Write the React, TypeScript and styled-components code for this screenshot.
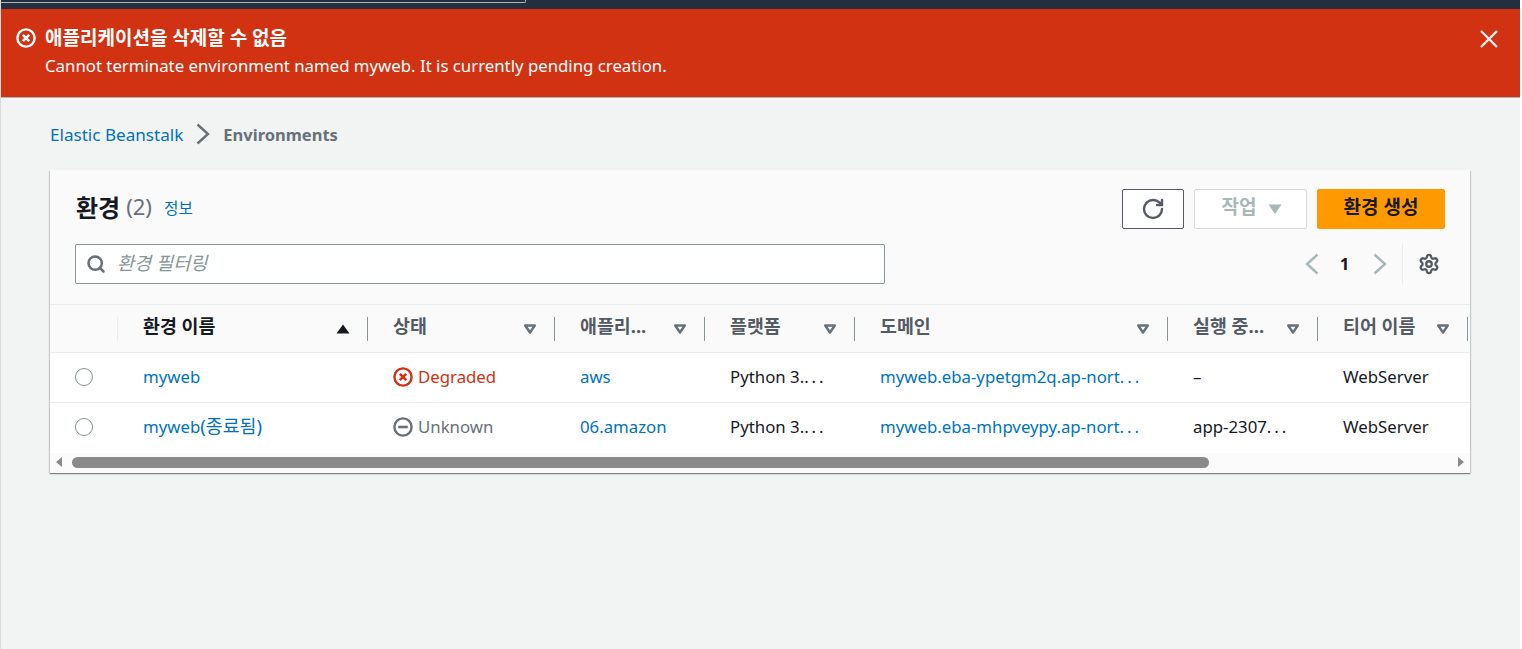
import React from "react";
import styled, { createGlobalStyle } from "styled-components";
import { RotateCw, Search, Settings } from "lucide-react";

const GlobalStyle = createGlobalStyle`
  html, body {
    margin: 0;
    padding: 0;
    height: 649px;
    overflow: hidden;
    background: #fff;
  }
  body {
    font-family: "Noto Sans", "Noto Sans CJK KR", sans-serif;
    font-size: 16.8px;
    color: #16191f;
  }
  * { box-sizing: border-box; }
`;

const columns = "68px 250px 187px 150px 150px 313px 150px 150px 2px";

type Column = { label: string; active?: boolean };

const headers: Column[] = [
  { label: "환경 이름", active: true },
  { label: "상태" },
  { label: "애플리..." },
  { label: "플랫폼" },
  { label: "도메인" },
  { label: "실행 중..." },
  { label: "티어 이름" },
];

type Row = {
  name: string;
  suffix?: string;
  health: "error" | "unknown";
  healthLabel: string;
  app: string;
  domain: string;
  running: string;
  runningCut?: boolean;
};

const rows: Row[] = [
  {
    name: "myweb",
    health: "error",
    healthLabel: "Degraded",
    app: "aws",
    domain: "myweb.eba-ypetgm2q.ap-nort",
    running: "–",
  },
  {
    name: "myweb",
    suffix: "(종료됨)",
    health: "unknown",
    healthLabel: "Unknown",
    app: "06.amazon",
    domain: "myweb.eba-mhpveypy.ap-nort",
    running: "app-2307",
    runningCut: true,
  },
];

const ErrorIcon = ({ size }: { size: number }) => (
  <svg width={size} height={size} viewBox="0 0 20 20" fill="none" stroke="currentColor" strokeWidth="2.4">
    <circle cx="10" cy="10" r="8.6" />
    <path d="M6.8 6.8l6.4 6.4M13.2 6.8l-6.4 6.4" strokeWidth="2.6" />
  </svg>
);

const MinusIcon = ({ size }: { size: number }) => (
  <svg width={size} height={size} viewBox="0 0 20 20" fill="none" stroke="currentColor" strokeWidth="2.4">
    <circle cx="10" cy="10" r="8.6" />
    <path d="M5.2 10h9.6" strokeWidth="2.6" />
  </svg>
);

const CloseIcon = () => (
  <svg width="20" height="20" viewBox="0 0 20 20" fill="none" stroke="currentColor" strokeWidth="2.4">
    <path d="M2 2l16 16M18 2L2 18" />
  </svg>
);

const Chevron = ({ left, color }: { left?: boolean; color: string }) => (
  <svg width="14" height="22" viewBox="0 0 14 22" fill="none" stroke={color} strokeWidth="2.4">
    <path d={left ? "M12.5 1.5L2 11l10.5 9.5" : "M1.5 1.5L12 11 1.5 20.5"} />
  </svg>
);

const Caret = ({ filled, up, color }: { filled?: boolean; up?: boolean; color: string }) => (
  <svg width="14" height="12" viewBox="0 0 14 12">
    {up ? (
      <path d="M7 1.5L13.5 10.5H.5Z" fill={color} />
    ) : filled ? (
      <path d="M.5 1.5H13.5L7 11Z" fill={color} />
    ) : (
      <path d="M2.2 2.5H11.8L7 9.5Z" fill="none" stroke={color} strokeWidth="2.4" strokeLinejoin="round" />
    )}
  </svg>
);

export default function App() {
  return (
    <>
      <GlobalStyle />
      <Page>
        <TopBar>
          <TopBarField />
        </TopBar>
        <Flash>
          <FlashIcon>
            <ErrorIcon size={20} />
          </FlashIcon>
          <FlashBody>
            <FlashTitle>애플리케이션을 삭제할 수 없음</FlashTitle>
            <FlashText>Cannot terminate environment named myweb. It is currently pending creation.</FlashText>
          </FlashBody>
          <FlashClose>
            <CloseIcon />
          </FlashClose>
        </Flash>
        <Content>
          <Breadcrumbs>
            <CrumbLink>Elastic Beanstalk</CrumbLink>
            <Chevron color="#687078" />
            <CrumbCurrent>Environments</CrumbCurrent>
          </Breadcrumbs>
          <Card>
            <CardHeader>
              <TitleRow>
                <TitleGroup>
                  <Title>환경</Title>
                  <Count>(2)</Count>
                  <InfoLink>정보</InfoLink>
                </TitleGroup>
                <Actions>
                  <IconButton>
                    <RotateCw size={24} strokeWidth={2.4} />
                  </IconButton>
                  <DisabledButton>
                    <ButtonLabel>작업</ButtonLabel>
                    <Caret filled color="#aab7b8" />
                  </DisabledButton>
                  <PrimaryButton>
                    <ButtonLabel>환경 생성</ButtonLabel>
                  </PrimaryButton>
                </Actions>
              </TitleRow>
              <ToolRow>
                <FilterBox>
                  <Search size={20} strokeWidth={3} color="#687078" />
                  <FilterInput placeholder="환경 필터링" readOnly />
                </FilterBox>
                <Pager>
                  <Chevron left color="#aab7b8" />
                  <PageNumber>1</PageNumber>
                  <Chevron color="#aab7b8" />
                  <PagerDivider />
                  <Settings size={22} strokeWidth={2.5} color="#545b64" />
                </Pager>
              </ToolRow>
            </CardHeader>
            <HeaderRow>
              <HeadCell $faint />
              {headers.map((h) => (
                <HeadCell key={h.label} $active={h.active}>
                  <HeadLabel>{h.label}</HeadLabel>
                  <Caret up={h.active} color={h.active ? "#16191f" : "#687078"} />
                </HeadCell>
              ))}
              <EndRule />
            </HeaderRow>
            {rows.map((r) => (
              <DataRow key={r.domain}>
                <RadioCell>
                  <Radio />
                </RadioCell>
                <Cell>
                  <CellLink>
                    {r.name}
                    {r.suffix && <Hangul>{r.suffix}</Hangul>}
                  </CellLink>
                </Cell>
                <Cell>
                  <Health $error={r.health === "error"}>
                    {r.health === "error" ? <ErrorIcon size={20} /> : <MinusIcon size={20} />}
                    {r.healthLabel}
                  </Health>
                </Cell>
                <Cell>
                  <CellLink>{r.app}</CellLink>
                </Cell>
                <Cell>
                  Python 3.<Dots>...</Dots>
                </Cell>
                <Cell>
                  <CellLink>
                    {r.domain}
                    <Dots>...</Dots>
                  </CellLink>
                </Cell>
                <Cell>
                  {r.running}
                  {r.runningCut && <Dots>...</Dots>}
                </Cell>
                <Cell>WebServer</Cell>
              </DataRow>
            ))}
            <ScrollTrack>
              <ScrollArrow />
              <ScrollThumb />
              <ScrollArrow $right />
            </ScrollTrack>
          </Card>
        </Content>
      </Page>
    </>
  );
}

const Page = styled.div`
  width: 1520px;
  height: 649px;
  display: flex;
  flex-direction: column;
  background: #f2f3f3;
  border-left: 1px solid #d5dbdb;
`;

const TopBar = styled.div`
  height: 9px;
  flex-shrink: 0;
  background: #232f3e;
`;

const TopBarField = styled.div`
  width: 525px;
  height: 3px;
  border: 1px solid #aab7b8;
  border-top: 0;
  border-left: 0;
  border-bottom-right-radius: 2px;
`;

const Flash = styled.div`
  height: 89px;
  flex-shrink: 0;
  display: flex;
  align-items: flex-start;
  background: #d13212;
  color: #fff;
  padding: 16px 21px 0 15px;
  border-bottom: 1px solid #aab7b8;
`;

const FlashIcon = styled.div`
  width: 29px;
  height: 26px;
  display: flex;
  align-items: center;
`;

const FlashBody = styled.div`
  flex: 1;
  display: flex;
  flex-direction: column;
  gap: 4px;
  padding-top: 1px;
`;

const FlashTitle = styled.div`
  font-size: 19px;
  font-weight: 700;
  line-height: 24px;
`;

const FlashText = styled.div`
  line-height: 24px;
`;

const FlashClose = styled.div`
  color: #eaeded;
  height: 20px;
  margin-top: 4px;
`;

const Content = styled.div`
  flex: 1;
  padding: 0 50px 0 49px;
`;

const Breadcrumbs = styled.div`
  height: 72px;
  display: flex;
  align-items: center;
  gap: 13px;
`;

const CrumbLink = styled.a`
  color: #0073bb;
  font-size: 17.1px;
`;

const CrumbCurrent = styled.span`
  color: #687078;
  font-size: 16.5px;
  font-weight: 700;
`;

const Card = styled.div`
  width: 1420px;
  background: #fff;
  box-shadow: 0 1px 1px 0 rgba(0, 28, 36, 0.3), 1px 1px 1px 0 rgba(0, 28, 36, 0.15),
    -1px 1px 1px 0 rgba(0, 28, 36, 0.15);
`;

const CardHeader = styled.div`
  height: 135px;
  background: #fafafa;
  padding: 19px 25px 0;
  border-bottom: 1px solid #eaeded;
`;

const TitleRow = styled.div`
  display: flex;
  justify-content: space-between;
  height: 40px;
`;

const TitleGroup = styled.div`
  display: flex;
  align-items: center;
  gap: 6px;
  padding: 0 0 6px 1px;
`;

const Title = styled.h1`
  margin: 0;
  font-size: 24px;
  font-weight: 700;
  color: #16191f;
`;

const Count = styled.span`
  font-size: 22px;
  color: #687078;
`;

const InfoLink = styled.a`
  color: #0073bb;
  font-size: 15.7px;
  margin: 2px 0 0 6px;
`;

const Actions = styled.div`
  display: flex;
  gap: 10px;
`;

const IconButton = styled.button`
  width: 62px;
  height: 40px;
  padding: 0;
  display: flex;
  align-items: center;
  justify-content: center;
  background: #fff;
  color: #545b64;
  border: 1px solid #545b64;
  border-radius: 2px;
`;

const ButtonLabel = styled.span`
  font-size: 19px;
  font-weight: 700;
  padding-bottom: 7px;
`;

const DisabledButton = styled.button`
  width: 113px;
  height: 40px;
  padding: 0 0 0 3px;
  display: flex;
  align-items: center;
  justify-content: center;
  gap: 12px;
  font-family: inherit;
  color: #aab7b8;
  background: #fff;
  border: 1px solid #d5dbdb;
  border-radius: 2px;
`;

const PrimaryButton = styled.button`
  width: 128px;
  height: 40px;
  padding: 0;
  display: flex;
  align-items: center;
  justify-content: center;
  font-family: inherit;
  color: #16191f;
  background: #ff9900;
  border: 1px solid #ff9900;
  border-radius: 2px;
`;

const ToolRow = styled.div`
  display: flex;
  justify-content: space-between;
  align-items: center;
  margin-top: 15px;
`;

const FilterBox = styled.div`
  width: 810px;
  height: 40px;
  display: flex;
  align-items: center;
  gap: 11px;
  padding: 0 10px;
  background: #fff;
  border: 1px solid #879596;
  border-radius: 2px;
`;

const FilterInput = styled.input`
  flex: 1;
  border: 0;
  outline: 0;
  background: transparent;
  padding: 0 0 3px;
  font-family: inherit;
  font-size: 18.6px;
  font-style: italic;
  &::placeholder {
    color: #879596;
    opacity: 1;
  }
`;

const Pager = styled.div`
  display: flex;
  align-items: center;
  height: 40px;
  padding-right: 5px;
`;

const PageNumber = styled.span`
  width: 54px;
  padding: 0 3px 1px 0;
  text-align: center;
  font-weight: 700;
`;

const PagerDivider = styled.div`
  width: 1px;
  height: 40px;
  background: #eaeded;
  margin: 0 15px;
`;

const HeaderRow = styled.div`
  display: grid;
  grid-template-columns: ${columns};
  height: 48px;
  background: #fafafa;
  border-bottom: 1px solid #eaeded;
  align-items: center;
`;

const HeadCell = styled.div<{ $active?: boolean; $faint?: boolean }>`
  height: 24px;
  display: flex;
  align-items: center;
  justify-content: space-between;
  padding: 0 17px 0 25px;
  font-weight: 700;
  color: ${(p) => (p.$active ? "#16191f" : "#545b64")};
  border-right: 1px solid ${(p) => (p.$faint ? "#eaeded" : "#879596")};
`;

const HeadLabel = styled.span`
  font-size: 18.4px;
  line-height: 24px;
  margin-top: -5px;
`;

const EndRule = styled.div`
  height: 24px;
`;

const DataRow = styled.div`
  display: grid;
  grid-template-columns: ${columns};
  height: 50px;
  align-items: center;
  border-bottom: 1px solid #eaeded;
  padding-bottom: 2px;
  &:nth-of-type(4) {
    border-bottom: 0;
    padding-bottom: 3px;
  }
`;

const Cell = styled.div`
  height: 24px;
  display: flex;
  align-items: center;
  padding: 0 25px;
  white-space: nowrap;
  color: #16191f;
`;

const RadioCell = styled.div`
  padding-left: 25px;
  display: flex;
`;

const Radio = styled.span`
  width: 18px;
  height: 18px;
  border: 1.5px solid #879596;
  border-radius: 50%;
  background: #fff;
`;

const CellLink = styled.a`
  color: #0073bb;
`;

const Hangul = styled.span`
  font-size: 18.4px;
  line-height: 20px;
`;

const Dots = styled.span`
  letter-spacing: 3px;
`;

const Health = styled.span<{ $error?: boolean }>`
  display: inline-flex;
  align-items: center;
  gap: 5px;
  color: ${(p) => (p.$error ? "#d13212" : "#687078")};
`;

const ScrollTrack = styled.div`
  height: 20px;
  display: flex;
  align-items: center;
  padding: 0 6px 2px;
  background: #fbfbfb;
`;

const ScrollArrow = styled.span<{ $right?: boolean }>`
  width: 0;
  height: 0;
  border-top: 5px solid transparent;
  border-bottom: 5px solid transparent;
  ${(p) =>
    p.$right
      ? "border-left: 6px solid #8a8a8a; margin-left: auto;"
      : "border-right: 6px solid #8a8a8a;"}
`;

const ScrollThumb = styled.div`
  width: 1137px;
  height: 11px;
  margin-left: 10px;
  border-radius: 6px;
  background: #8a8a8a;
`;
